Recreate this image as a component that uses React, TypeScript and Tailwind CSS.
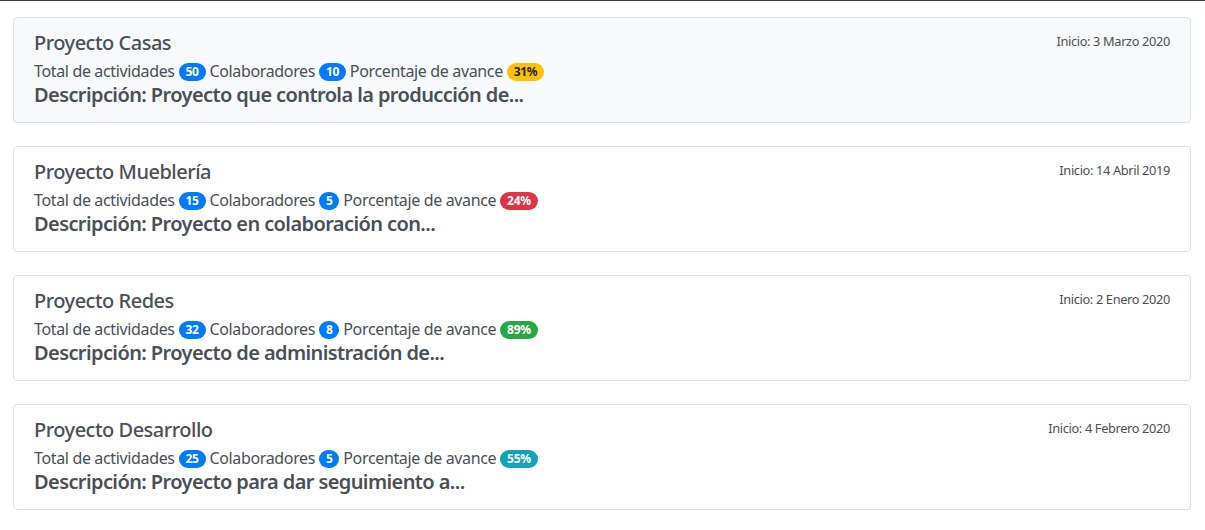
import React from "react";

interface Proyecto {
  nombre: string;
  actividades: number;
  colaboradores: number;
  avance: number;
  badge: string;
  inicio: string;
  descripcion: string;
  active?: boolean;
}

const proyectos: Proyecto[] = [
  {
    nombre: "Proyecto Casas",
    actividades: 50,
    colaboradores: 10,
    avance: 31,
    badge: "bg-[#ffc107] text-[#212529]",
    inicio: "Inicio: 3 Marzo 2020",
    descripcion: "Proyecto que controla la producción de...",
    active: true,
  },
  {
    nombre: "Proyecto Mueblería",
    actividades: 15,
    colaboradores: 5,
    avance: 24,
    badge: "bg-[#dc3545] text-white",
    inicio: "Inicio: 14 Abril 2019",
    descripcion: "Proyecto en colaboración con...",
  },
  {
    nombre: "Proyecto Redes",
    actividades: 32,
    colaboradores: 8,
    avance: 89,
    badge: "bg-[#28a745] text-white",
    inicio: "Inicio: 2 Enero 2020",
    descripcion: "Proyecto de administración de...",
  },
  {
    nombre: "Proyecto Desarrollo",
    actividades: 25,
    colaboradores: 5,
    avance: 55,
    badge: "bg-[#17a2b8] text-white",
    inicio: "Inicio: 4 Febrero 2020",
    descripcion: "Proyecto para dar seguimiento a...",
  },
];

const Badge: React.FC<{ className: string; children: React.ReactNode }> = ({ className, children }) => (
  <span
    className={`inline-block rounded-full px-[7px] py-[3px] text-[12px] font-bold leading-none tracking-[-0.3px] align-[1px] ${className}`}
  >
    {children}
  </span>
);

const ProyectoCard: React.FC<{ p: Proyecto }> = ({ p }) => (
  <div
    className={`rounded-[4px] border border-[#dfdfdf] px-5 py-3 ${p.active ? "bg-[#f8f9fa]" : "bg-white"}`}
  >
    <div className="flex items-start justify-between">
      <h5 className="mb-1 pt-[1px] text-[20px] font-medium leading-6 tracking-[-0.5px]">{p.nombre}</h5>
      <small className="pt-[3px] text-[12.8px] leading-4 tracking-[-0.35px]">{p.inicio}</small>
    </div>
    <p className="mb-1 text-[16px] leading-6 tracking-[-0.35px]">
      Total de actividades <Badge className="bg-[#007bff] text-white">{p.actividades}</Badge> Colaboradores{" "}
      <Badge className="bg-[#007bff] text-white">{p.colaboradores}</Badge> Porcentaje de avance{" "}
      <Badge className={p.badge}>{p.avance}%</Badge>
    </p>
    <h5 className="-mt-[4px] pb-[3px] text-[20px] font-semibold leading-6 tracking-[-0.6px]">
      Descripción: {p.descripcion}
    </h5>
  </div>
);

export default function App() {
  return (
    <div className="min-h-screen border-t border-[#343a40] bg-white text-[#495057] [font-family:'Noto_Sans',sans-serif]">
      <div className="flex flex-col gap-[23px] pl-[13px] pr-[14px] pt-4">
        {proyectos.map((p) => (
          <ProyectoCard key={p.nombre} p={p} />
        ))}
      </div>
    </div>
  );
}
